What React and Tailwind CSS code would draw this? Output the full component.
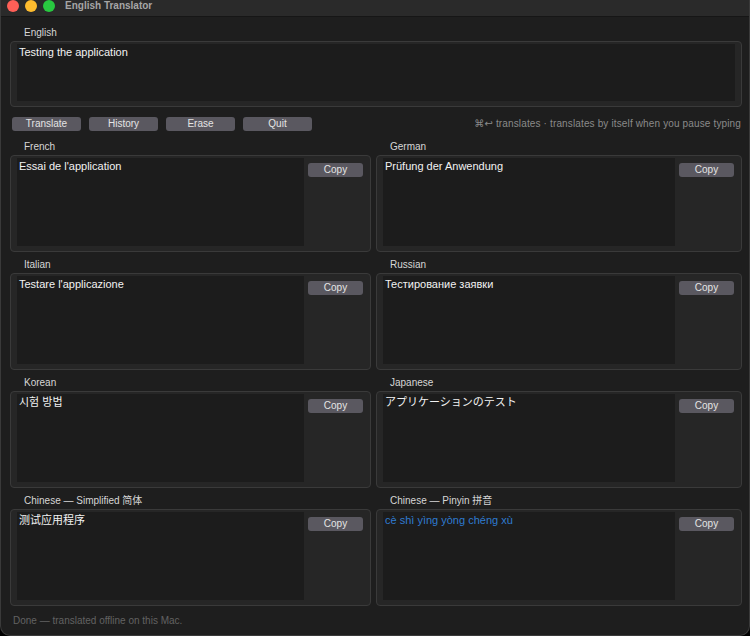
const langs = [
  { label: "French", text: "Essai de l'application" },
  { label: "German", text: "Prüfung der Anwendung" },
  { label: "Italian", text: "Testare l'applicazione" },
  { label: "Russian", text: "Тестирование заявки" },
  { label: "Korean", text: "시험 방법", font: "font-['Liberation_Sans','Noto_Sans_CJK_KR',sans-serif]" },
  { label: "Japanese", text: "アプリケーションのテスト", font: "font-['Liberation_Sans','Noto_Sans_CJK_JP',sans-serif]" },
  { label: "Chinese — Simplified 简体", text: "测试应用程序", font: "font-['Liberation_Sans','Noto_Sans_CJK_SC',sans-serif]" },
  { label: "Chinese — Pinyin 拼音", text: "cè shì yìng yòng chéng xù", blue: true },
];

function Cell({ label, text, font, blue }) {
  return (
    <div className="flex flex-col">
      <div className="h-[12px] leading-[13px] text-[10px] text-[#d6d6d6] pl-[14px] font-['Liberation_Sans','Noto_Sans_CJK_SC',sans-serif]">
        {label}
      </div>
      <div className="mt-[3px] h-[97px] flex rounded-[4px] border border-[#3a3a3a] bg-[#262626] pt-[2px] pb-[5px] pl-[6px] pr-[7px]">
        <div
          className={
            "flex-1 bg-[#1c1c1c] pl-[2px] pt-[2px] text-[11px] leading-[13px] " +
            (blue ? "text-[#2f7bd0] " : "text-[#f2f2f2] ") +
            (font || "font-['Liberation_Sans',sans-serif]")
          }
        >
          {text}
        </div>
        <div className="ml-[4px] mt-[5px] w-[55px] h-[14px] rounded-[3px] bg-[#5a5860] text-[10px] leading-[14px] text-center text-[#e4e4e4]">
          Copy
        </div>
      </div>
    </div>
  );
}

export default function App() {
  return (
    <div className="w-[750px] h-[636px] bg-black font-['Liberation_Sans',sans-serif]">
      <div className="h-full flex flex-col rounded-b-[10px] border border-t-0 border-[#3a3a3a] bg-[#1e1e1e] overflow-hidden">
        <div className="h-[17px] shrink-0 bg-[#2a2a2a] border-b border-[#161616] flex items-start">
          <div className="h-[11px] flex items-center pl-[6px] gap-[6px]">
            <div className="w-[12px] h-[12px] rounded-full bg-[#ff5f57]" />
            <div className="w-[12px] h-[12px] rounded-full bg-[#febc2e]" />
            <div className="w-[12px] h-[12px] rounded-full bg-[#28c840]" />
            <div className="ml-[4px] text-[10px] font-bold text-[#a6a6a6] leading-[11px]">English Translator</div>
          </div>
        </div>
        <div className="flex flex-col pl-[9px] pr-[7px]">
          <div className="mt-[9px] h-[12px] leading-[13px] text-[10px] text-[#d6d6d6] pl-[14px]">English</div>
          <div className="mt-[3px] h-[66px] flex rounded-[4px] border border-[#3a3a3a] bg-[#262626] pt-[2px] pb-[5px] pl-[6px] pr-[6px]">
            <div className="flex-1 bg-[#1c1c1c] pl-[2px] pt-[2px] text-[11px] leading-[13px] text-[#f2f2f2]">
              Testing the application
            </div>
          </div>
          <div className="mt-[10px] h-[14px] flex items-center">
            <div className="flex gap-[8px] pl-[2px]">
              {["Translate", "History", "Erase", "Quit"].map((b) => (
                <div
                  key={b}
                  className="w-[69px] h-[14px] rounded-[3px] bg-[#5a5860] text-[10px] leading-[14px] text-center text-[#e4e4e4]"
                >
                  {b}
                </div>
              ))}
            </div>
            <div className="ml-auto pr-[1px] text-[10px] leading-[14px] tracking-[0.14px] text-[#8a8a8a] font-['Liberation_Sans','DejaVu_Sans',sans-serif]">
              ⌘↩ translates · translates by itself when you pause typing
            </div>
          </div>
          <div className="mt-[9px] grid grid-cols-[361px_366px] gap-x-[5px] gap-y-[6px]">
            {langs.map((l) => (
              <Cell key={l.label} {...l} />
            ))}
          </div>
          <div className="mt-[9px] pl-[3px] text-[10px] leading-[12px] text-[#626262]">
            Done — translated offline on this Mac.
          </div>
        </div>
      </div>
    </div>
  );
}
